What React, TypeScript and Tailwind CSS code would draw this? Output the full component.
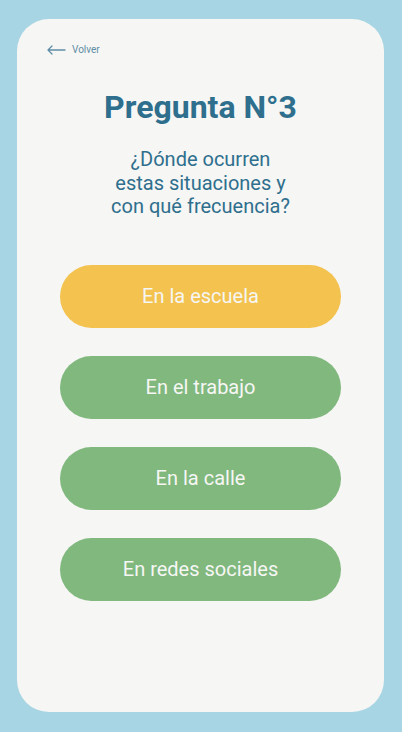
import React from "react";

export default function App() {
  const options = [
    { label: "En la escuela", cls: "bg-[#f3c24f]" },
    { label: "En el trabajo", cls: "bg-[#80b87e]" },
    { label: "En la calle", cls: "bg-[#80b87e]" },
    { label: "En redes sociales", cls: "bg-[#80b87e]" },
  ];
  return (
    <div className="w-[402px] h-[732px] bg-[#a8d5e4] pt-[19px] pl-[17px] font-['Roboto',sans-serif]">
      <div className="w-[367px] h-[693px] rounded-[32px] bg-[#f6f6f4] flex flex-col">
        <div className="flex items-center gap-[6px] pl-[30px] pt-[25px] h-[37px] text-[#5f8ea6]">
          <svg width="19" height="10" viewBox="0 0 19 10" fill="none">
            <path d="M1 5H18M1 5L5 1M1 5L5 9" stroke="#5f8ea6" strokeWidth="1.3" strokeLinecap="round" strokeLinejoin="round" />
          </svg>
          <span className="text-[10px] leading-none">Volver</span>
        </div>
        <h1 className="mt-[33px] text-center text-[32px] leading-[36px] font-bold text-[#2e6f8e]">Pregunta N°3</h1>
        <p className="mt-[23px] text-center text-[20px] leading-[23.5px] text-[#2e6f8e]">
          ¿Dónde ocurren
          <br />
          estas situaciones y
          <br />
          con qué frecuencia?
        </p>
        <div className="mt-[46px] flex flex-col items-center gap-[28px]">
          {options.map((o) => (
            <button
              key={o.label}
              className={`w-[281px] h-[63px] rounded-full ${o.cls} text-[#f6f6f4] text-[20px] flex items-center justify-center`}
            >
              {o.label}
            </button>
          ))}
        </div>
      </div>
    </div>
  );
}
